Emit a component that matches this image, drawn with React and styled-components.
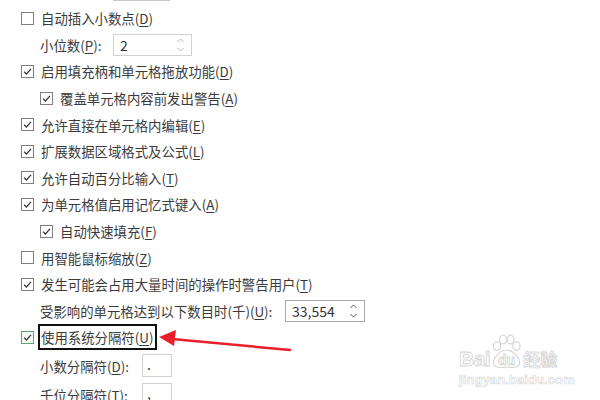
import React from "react";
import styled, { createGlobalStyle } from "styled-components";

const Global = createGlobalStyle`
  html, body { margin: 0; padding: 0; background: #fff; }
  body {
    width: 600px; height: 400px; overflow: hidden;
    font-family: "Noto Sans CJK SC", "Noto Sans", sans-serif;
    color: #3b3b3b;
  }
`;

const Page = styled.div`
  position: relative;
  width: 600px;
  height: 400px;
  overflow: hidden;
`;

const List = styled.div`
  display: flex;
  flex-direction: column;
  padding-top: 4px;
`;

const TopStub = styled.div`
  margin: -20px 0 0 113px;
  width: 57px;
  height: 21px;
  border: 1px solid #c8c8c8;
  box-sizing: border-box;
`;

const Row = styled.div`
  display: flex;
  align-items: center;
  height: ${(p) => p.$h || 26.6}px;
  padding-left: ${(p) => p.$indent}px;
  font-size: 13.4px;
  white-space: nowrap;
`;

const Box = styled.span`
  width: 13px;
  height: 13px;
  box-sizing: border-box;
  border: 1px solid ${(p) => (p.$focus ? "#5fa074" : "#7f7f7f")};
  background: ${(p) => (p.$focus ? "#f3faf5" : "#fff")};
  display: inline-flex;
  align-items: center;
  justify-content: center;
  margin-right: 7px;
  flex-shrink: 0;
`;

const Label = styled.span`
  line-height: 20px;
  padding: 0 2px 0 0;
  ${(p) =>
    p.$focus &&
    `outline: 2px solid #111; outline-offset: 0; padding: 1px 2px 1px 1px; margin-left: -1px;`}
`;

const U = styled.span`
  text-decoration: underline;
  text-underline-offset: 2px;
`;

const FieldLabel = styled.span`
  width: ${(p) => p.$w}px;
  flex-shrink: 0;
`;

const Spin = styled.div`
  width: ${(p) => p.$w}px;
  height: 22px;
  box-sizing: border-box;
  border: 1px solid ${(p) => (p.$dark ? "#a8a8a8" : "#d2d2d2")};
  display: flex;
  align-items: center;
  justify-content: space-between;
  padding: 0 6px 0 6px;
  font-size: 14px;
  color: #333;
`;

const Arrows = styled.svg`
  width: 9px;
  height: 16px;
`;

const SmallBox = styled.div`
  width: 30px;
  height: 23px;
  box-sizing: border-box;
  border: 1px solid #d2d2d2;
  padding: 0 0 0 4px;
  font-size: 14px;
  line-height: 19px;
`;

const Overlay = styled.svg`
  position: absolute;
  left: 0;
  top: 0;
  pointer-events: none;
`;

const Watermark = styled.div`
  position: absolute;
  left: 459px;
  top: 333px;
  white-space: nowrap;
  color: #fff;
  font-family: "Liberation Sans", Arial, sans-serif;
  -webkit-text-stroke: 0.9px #d6d6d6;
`;

const WmTop = styled.div`
  display: flex;
  align-items: flex-end;
  height: 35px;
`;

const WmBai = styled.span`
  font-size: 21px;
  font-weight: bold;
  line-height: 18px;
  letter-spacing: -0.5px;
`;

const WmCn = styled.span`
  font-family: "Noto Sans CJK SC", sans-serif;
  font-size: 17px;
  font-weight: bold;
  line-height: 18px;
`;

const WmUrl = styled.div`
  font-size: 13px;
  font-weight: bold;
  -webkit-text-stroke: 0.6px #d6d6d6;
  margin-top: 4px;
  letter-spacing: 0.1px;
`;

const Check = () => (
  <svg width="9" height="9" viewBox="0 0 9 9">
    <polyline points="1,4.6 3.4,7 8,1.8" fill="none" stroke="#333" strokeWidth="1.2" />
  </svg>
);

const CheckRow = ({ indent = 21, checked, focus, children }) => (
  <Row $indent={indent}>
    <Box $focus={focus}>{checked && <Check />}</Box>
    <Label $focus={focus}>{children}</Label>
  </Row>
);

const SpinArrows = ({ color }) => (
  <Arrows viewBox="0 0 9 16">
    <polyline points="1.5,5 4.5,2 7.5,5" fill="none" stroke={color} strokeWidth="1" />
    <polyline points="1.5,11 4.5,14 7.5,11" fill="none" stroke={color} strokeWidth="1" />
  </Arrows>
);

const Paw = () => (
  <svg width="33" height="35" viewBox="0 0 33 35" style={{ margin: "0 0 -1px 0" }}>
    <g fill="#fff" stroke="#d6d6d6" strokeWidth="1.2">
      <ellipse cx="7" cy="12" rx="3.6" ry="4.4" />
      <ellipse cx="13" cy="5.5" rx="3.4" ry="4.4" />
      <ellipse cx="20.5" cy="5.5" rx="3.4" ry="4.4" />
      <ellipse cx="26.5" cy="12" rx="3.6" ry="4.4" />
      <path d="M16.5 16 C 10 16 3 24 3.5 29 C 4 34 10 34 16.5 33 C 23 34 29 34 29.5 29 C 30 24 23 16 16.5 16 Z" />
    </g>
    <text
      x="16.5"
      y="31"
      textAnchor="middle"
      fontFamily="Liberation Sans, Arial, sans-serif"
      fontWeight="bold"
      fontSize="14"
      fill="#fff"
      stroke="#d6d6d6"
      strokeWidth="0.9"
    >
      du
    </text>
  </svg>
);

export default function App() {
  return (
    <Page>
      <Global />
      <TopStub />
      <List>
        <CheckRow>自动插入小数点(<U>D</U>)</CheckRow>
        <Row $indent={40}>
          <FieldLabel $w={73}>小位数(<U>P</U>):</FieldLabel>
          <Spin $w={79}>
            <span>2</span>
            <SpinArrows color="#b8b8b8" />
          </Spin>
        </Row>
        <CheckRow checked>启用填充柄和单元格拖放功能(<U>D</U>)</CheckRow>
        <CheckRow checked indent={40}>覆盖单元格内容前发出警告(<U>A</U>)</CheckRow>
        <CheckRow checked>允许直接在单元格内编辑(<U>E</U>)</CheckRow>
        <CheckRow checked>扩展数据区域格式及公式(<U>L</U>)</CheckRow>
        <CheckRow checked>允许自动百分比输入(<U>T</U>)</CheckRow>
        <CheckRow checked>为单元格值启用记忆式键入(<U>A</U>)</CheckRow>
        <CheckRow checked indent={40}>自动快速填充(<U>F</U>)</CheckRow>
        <CheckRow>用智能鼠标缩放(<U>Z</U>)</CheckRow>
        <CheckRow checked>发生可能会占用大量时间的操作时警告用户(<U>T</U>)</CheckRow>
        <Row $indent={40}>
          <FieldLabel $w={245}>受影响的单元格达到以下数目时(千)(<U>U</U>):</FieldLabel>
          <Spin $w={80} $dark>
            <span>33,554</span>
            <SpinArrows color="#555" />
          </Spin>
        </Row>
        <CheckRow checked focus>使用系统分隔符(<U>U</U>)</CheckRow>
        <Row $indent={40} $h={30}>
          <FieldLabel $w={102}>小数分隔符(<U>D</U>):</FieldLabel>
          <SmallBox>.</SmallBox>
        </Row>
        <Row $indent={40} $h={28}>
          <FieldLabel $w={102}>千位分隔符(<U>T</U>):</FieldLabel>
          <SmallBox>,</SmallBox>
        </Row>
      </List>
      <Overlay width="600" height="400">
        <line x1="290" y1="350" x2="172" y2="339" stroke="#e8202a" strokeWidth="2.5" strokeLinecap="round" />
        <polygon points="159,337 176,330 174,346" fill="#e8202a" />
      </Overlay>
      <Watermark>
        <WmTop>
          <WmBai>Bai</WmBai>
          <Paw />
          <WmCn>经验</WmCn>
        </WmTop>
        <WmUrl>jingyan.baidu.com</WmUrl>
      </Watermark>
    </Page>
  );
}
